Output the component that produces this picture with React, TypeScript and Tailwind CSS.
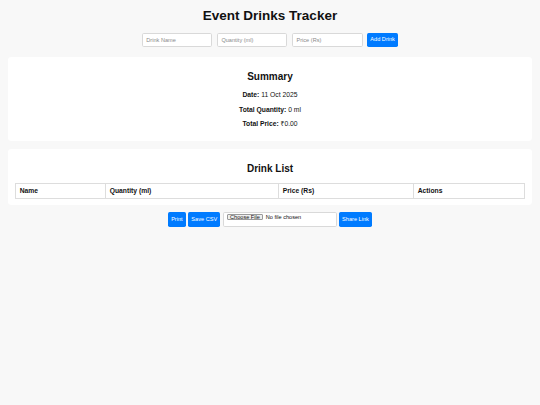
import React, { useState } from 'react';

interface Drink {
  name: string;
  quantity: number;
  price: number;
}

const inputCls =
  'w-[70.5px] h-[14px] px-[3.4px] border border-[#d9d9d9] rounded-[1.7px] bg-white text-[5.6px] outline-none placeholder:text-[#8a8a8a]';
const btnCls =
  'h-[14.5px] px-[3.2px] rounded-[1.7px] bg-[#007bff] text-white text-[5.6px] leading-none whitespace-nowrap';
const cellCls = 'border border-[#dddddd] px-[4px] py-[3.3px] text-left';

export default function App() {
  const [drinks] = useState<Drink[]>([]);
  const totalQty = drinks.reduce((s, d) => s + d.quantity, 0);
  const totalPrice = drinks.reduce((s, d) => s + d.price, 0);

  return (
    <div
      className="min-h-screen bg-[#f8f8f8] px-[8.4px] pt-[7.5px] text-[#111]"
      style={{ fontFamily: '"Liberation Sans", Arial, "Noto Sans", sans-serif' }}
    >
      <h1 className="text-center text-[13.5px] font-bold leading-[15.5px]">Event Drinks Tracker</h1>

      {/* add form */}
      <div className="mt-[10px] flex justify-center gap-[4.6px]">
        <input className={inputCls} placeholder="Drink Name" />
        <input className={inputCls} placeholder="Quantity (ml)" />
        <input className={inputCls} placeholder="Price (Rs)" />
        <button className={`${btnCls} h-[14px]`}>Add Drink</button>
      </div>

      {/* summary */}
      <div className="mt-[10px] rounded-[3.4px] bg-white px-[6.3px] pt-[14px] pb-[6.3px] text-center text-[6.75px] leading-[7.75px]">
        <h2 className="mb-[8.5px] text-[10px] font-bold leading-[11.5px]">Summary</h2>
        <p className="mb-[6.75px]">
          <b>Date:</b> 11 Oct 2025
        </p>
        <p className="mb-[6.75px]">
          <b>Total Quantity:</b> {totalQty} ml
        </p>
        <p className="mb-[6.75px]">
          <b>Total Price:</b> ₹{totalPrice.toFixed(2)}
        </p>
      </div>

      {/* drink list */}
      <div className="mt-[8px] rounded-[3.4px] bg-white px-[6.3px] pt-[14px] pb-[6.3px] text-[6.75px] leading-[7.75px]">
        <h2 className="mb-[8.5px] text-center text-[10px] font-bold leading-[11.5px]">Drink List</h2>
        <table className="w-full border-collapse">
          <thead>
            <tr>
              <th className={`${cellCls} w-[90px]`}>Name</th>
              <th className={`${cellCls} w-[173px]`}>Quantity (ml)</th>
              <th className={`${cellCls} w-[135px]`}>Price (Rs)</th>
              <th className={cellCls}>Actions</th>
            </tr>
          </thead>
          <tbody>
            {drinks.map((d, i) => (
              <tr key={i}>
                <td className={cellCls}>{d.name}</td>
                <td className={cellCls}>{d.quantity}</td>
                <td className={cellCls}>{d.price}</td>
                <td className={cellCls}></td>
              </tr>
            ))}
          </tbody>
        </table>
      </div>

      {/* actions */}
      <div className="mt-[6.5px] flex items-center justify-center gap-[2.3px]">
        <button className={btnCls}>Print</button>
        <button className={btnCls}>Save CSV</button>
        <input
          type="file"
          className="h-[15.5px] w-[114px] rounded-[1.7px] border border-[#d9d9d9] bg-white px-[3px] text-[5.6px] text-[#111] file:mr-[2.5px] file:h-[6px] file:rounded-[1px] file:border file:border-[#9a9a9a] file:bg-[#efefef] file:px-[2.4px] file:text-[5.6px] file:leading-[5px]"
        />
        <button className={btnCls}>Share Link</button>
      </div>
    </div>
  );
}
